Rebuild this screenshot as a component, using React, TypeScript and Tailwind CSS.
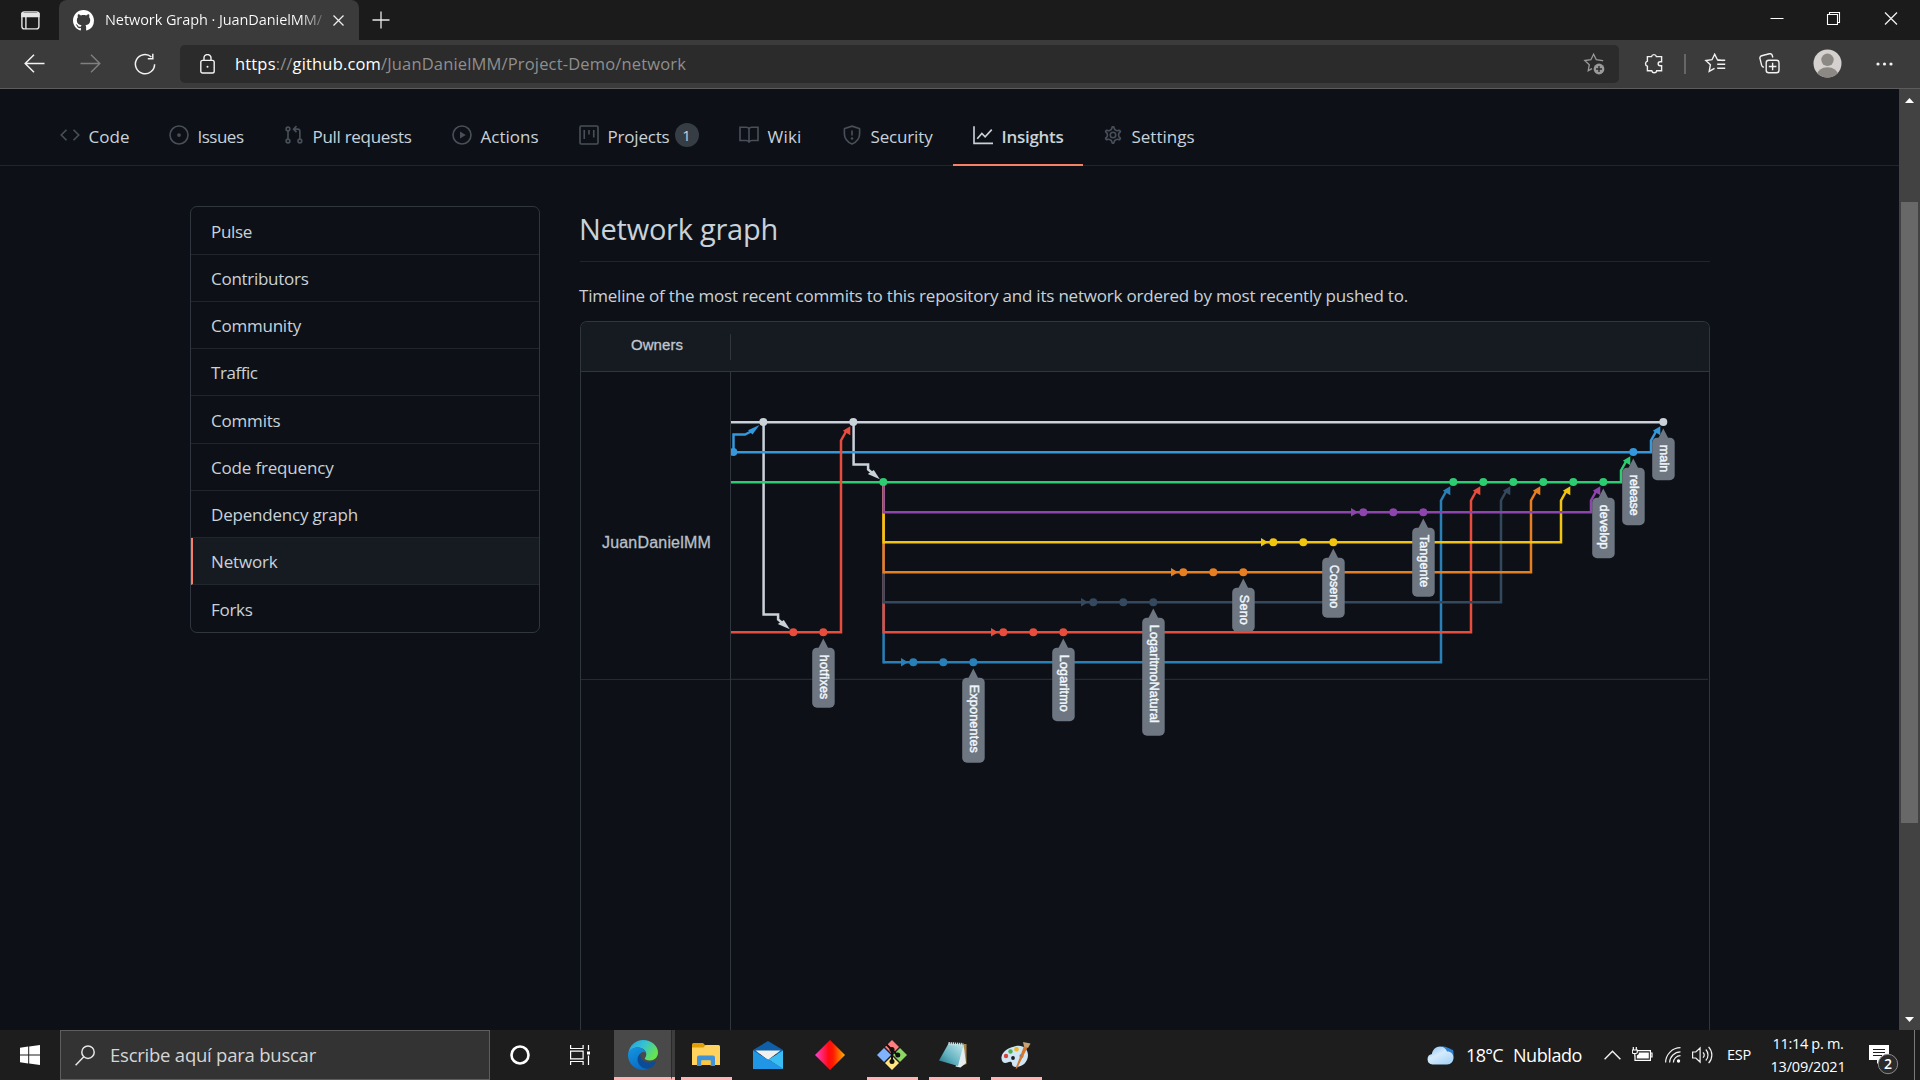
import { useLayoutEffect, useRef, type ReactNode } from "react";

/** Text run whose tracking is computed so that it fills exactly `w` pixels. */
function Fit({ w, className = "", children }: { w: number; className?: string; children: ReactNode }) {
  const ref = useRef<HTMLSpanElement>(null);
  useLayoutEffect(() => {
    const el = ref.current;
    if (!el) return;
    el.style.letterSpacing = "0px";
    const n = (el.textContent ?? "").length;
    el.style.letterSpacing = `${(w - el.getBoundingClientRect().width) / n}px`;
  }, [w]);
  return (
    <span ref={ref} className={`inline-block shrink-0 whitespace-pre ${className}`}>
      {children}
    </span>
  );
}

/* ---------- Browser chrome ---------- */

const MARK =
  "M8 0C3.58 0 0 3.58 0 8c0 3.54 2.29 6.53 5.47 7.59.4.07.55-.17.55-.38 0-.19-.01-.82-.01-1.49-2.01.37-2.53-.49-2.69-.94-.09-.23-.48-.94-.82-1.13-.28-.15-.68-.52-.01-.53.63-.01 1.08.58 1.23.82.72 1.21 1.87.87 2.33.66.07-.52.28-.87.51-1.07-1.78-.2-3.64-.89-3.64-3.95 0-.87.31-1.59.82-2.15-.08-.2-.36-1.02.08-2.12 0 0 .67-.21 2.2.82.64-.18 1.32-.27 2-.27s1.36.09 2 .27c1.53-1.04 2.2-.82 2.2-.82.44 1.1.16 1.92.08 2.12.51.56.82 1.27.82 2.15 0 3.07-1.87 3.75-3.65 3.95.29.25.54.73.54 1.48 0 1.07-.01 1.93-.01 2.2 0 .21.15.46.55.38A8.01 8.01 0 0 0 16 8c0-4.42-3.58-8-8-8z";

function TabStrip() {
  return (
    <div className="flex h-10 shrink-0 bg-[#1b1b1b]">
      <div className="flex w-[59px] items-center pl-[21px]">
        <svg width="19" height="19" viewBox="0 0 19 19" fill="none" stroke="#e4e4e4" strokeWidth="1.4">
          <rect x="0.9" y="0.9" width="17" height="17" rx="2.4" />
          <path d="M1 2.5h17v3H1z" fill="#e4e4e4" />
          <path d="M4.9 6v12" />
        </svg>
      </div>
      <div className="flex w-[300px] items-center rounded-t-lg bg-[#3b3b3b] pl-3.5">
        <svg width="21" height="21" viewBox="0 0 16 16" fill="#fff" className="shrink-0">
          <path d={MARK} />
        </svg>
        <Fit
          w={217}
          className="ml-[11px] bg-linear-to-r from-white from-90% to-[#6b6b6b] bg-clip-text text-[14.5px] text-transparent"
        >
          Network Graph · JuanDanielMM/
        </Fit>
        <svg width="11" height="11" viewBox="0 0 11 11" stroke="#eee" strokeWidth="1.3" className="ml-[11px] shrink-0">
          <path d="M0.5 0.5l10 10M10.5 0.5l-10 10" />
        </svg>
      </div>
      <svg width="18" height="18" viewBox="0 0 18 18" stroke="#e8e8e8" strokeWidth="1.3" className="mt-[11px] ml-[13px]">
        <path d="M9 0.5v17M0.5 9h17" />
      </svg>
      <div className="ml-auto flex">
        <svg width="14" height="40" viewBox="0 0 14 40" className="mr-[42px]">
          <path d="M0.5 18.5h13" stroke="#fff" />
        </svg>
        <svg width="15" height="40" viewBox="0 0 15 40" fill="none" stroke="#fff" strokeWidth="1.1" className="mr-[43px]">
          <path d="M1.5 14.5h10v10h-10zM3.5 14.5v-2h10v10h-2" />
        </svg>
        <svg width="14" height="40" viewBox="0 0 14 40" stroke="#eee" strokeWidth="1.3" className="mr-[22px]">
          <path d="M1 12.5l12 12M13 12.5l-12 12" />
        </svg>
      </div>
    </div>
  );
}

function Toolbar() {
  return (
    <div className="flex h-[49px] shrink-0 border-b border-[#5c5c5c] bg-[#3b3b3b] pb-px">
      <div className="flex w-[180px] items-center pl-[24px]">
        <svg width="21" height="19" viewBox="0 0 21 19" fill="none" stroke="#f2f2f2" strokeWidth="1.5">
          <path d="M20.5 9.5H1M10 0.8L1.2 9.5 10 18.2" />
        </svg>
        <svg width="21" height="19" viewBox="0 0 21 19" fill="none" stroke="#808080" strokeWidth="1.4" className="ml-[35px]">
          <path d="M0.5 9.5H20M11 0.8l8.8 8.7L11 18.2" />
        </svg>
        <svg width="22" height="22" viewBox="0 0 22 22" fill="none" stroke="#f2f2f2" strokeWidth="1.5" className="ml-[33px]">
          <path d="M20.6 11.2A9.6 9.6 0 1 1 17.4 4M18.8 0.8v5h-5" />
        </svg>
      </div>
      <div className="mt-[5px] flex h-[38px] w-[1439px] items-center rounded-[5px] bg-[#2b2b2b] pl-5">
        <svg width="15" height="20" viewBox="0 0 15 20" fill="none" stroke="#f2f2f2" strokeWidth="1.4">
          <rect x="0.8" y="6.4" width="13.4" height="12.6" rx="1.8" />
          <path d="M4 6.4V4a3.5 3.5 0 0 1 7 0v2.4" />
          <circle cx="7.5" cy="12.7" r="1" fill="#f2f2f2" stroke="none" />
        </svg>
        <Fit w={451} className="ml-5 text-[16.5px] text-[#8f8f8f]">
          <span className="text-white">https</span>://<span className="text-white">github.com</span>
          /JuanDanielMM/Project-Demo/network
        </Fit>
        <svg width="22" height="22" viewBox="0 0 22 22" fill="none" stroke="#999" strokeWidth="1.3" className="mr-[14px] ml-auto">
          <path d="M20 8.2l-.6-.7-6.1-.8-2.7-5.5-2.7 5.5-6.1.8 4.5 4.2-1.1 6 3.8-2" />
          <circle cx="16" cy="16" r="5.4" fill="#999" stroke="none" />
          <path d="M16 13v6M13 16h6" stroke="#2b2b2b" strokeWidth="1.4" />
        </svg>
      </div>
      <div className="flex flex-1 items-center pl-[25px]">
        <svg width="20" height="21" viewBox="0 0 20 21" fill="none" stroke="#f2f2f2" strokeWidth="1.4">
          <path d="M3.4 3.6h4.1a2.5 2.5 0 0 1 4.9 0h5.2v5.1h-1.4a2 2 0 0 0 0 4.1h1.4v5h-4.9a2.5 2.5 0 0 1-4.9 0H3.4v-4.6a2.6 2.6 0 0 1 0-5z" />
        </svg>
        <div className="ml-5 h-5 w-0.5 bg-[#666]" />
        <svg width="22" height="21" viewBox="0 0 22 21" fill="none" stroke="#f2f2f2" strokeWidth="1.4" className="ml-[18px]">
          <path d="M19.5 7.5l-6.1-.8-2.7-5.5-2.7 5.5-6.1.8 4.5 4.2-1.2 6.6 5.3-3M13.2 7.3h8M13.2 11.3h8M13.2 15.2h8" />
        </svg>
        <svg width="21" height="21" viewBox="0 0 21 21" fill="none" stroke="#f2f2f2" strokeWidth="1.4" className="ml-[33px]">
          <rect x="7.2" y="7.2" width="12.8" height="12.6" rx="2.5" />
          <path d="M13.6 9.7v7.6M9.8 13.5h7.6M4.8 14.4l-1.2-.7a3 3 0 0 1-1-1.600L1 5.7a2.4 2.4 0 0 1 1.7-3l7.7-1.9a2.4 2.4 0 0 1 2.9 1.7l.5 2" />
        </svg>
        <svg width="29" height="29" viewBox="0 0 29 29" className="ml-[33px]">
          <clipPath id="avatar">
            <circle cx="14.5" cy="14.5" r="14" />
          </clipPath>
          <g clipPath="url(#avatar)">
            <rect width="29" height="29" fill="#d4d1ce" />
            <circle cx="14.5" cy="10.8" r="6.2" fill="#8c8884" />
            <ellipse cx="14.5" cy="25.6" rx="10.4" ry="7.3" fill="#8c8884" />
          </g>
        </svg>
        <svg width="17" height="4" viewBox="0 0 17 4" fill="#f2f2f2" className="ml-[34px]">
          <circle cx="2" cy="2" r="1.6" />
          <circle cx="8.5" cy="2" r="1.6" />
          <circle cx="15" cy="2" r="1.6" />
        </svg>
      </div>
    </div>
  );
}

/* ---------- Repository navigation ---------- */

const GEAR =
  "M7.429 1.525a6.593 6.593 0 011.142 0c.036.003.108.036.137.146l.289 1.105c.147.56.55.967.997 1.189.174.086.341.183.501.29.417.278.97.423 1.53.27l1.102-.303c.11-.03.175.016.195.046.219.31.41.641.573.989.014.031.022.11-.059.19l-.815.806c-.411.406-.562.957-.53 1.456a4.588 4.588 0 010 .582c-.032.499.119 1.05.53 1.456l.815.806c.08.08.073.159.059.19a6.494 6.494 0 01-.573.99c-.02.029-.086.074-.195.045l-1.103-.303c-.559-.153-1.112-.008-1.529.27-.16.107-.327.204-.5.29-.449.222-.851.628-.998 1.189l-.289 1.105c-.029.11-.101.143-.137.146a6.613 6.613 0 01-1.142 0c-.036-.003-.108-.037-.137-.146l-.289-1.105c-.147-.56-.55-.967-.997-1.189a4.502 4.502 0 01-.501-.29c-.417-.278-.97-.423-1.53-.27l-1.102.303c-.11.03-.175-.016-.195-.046a6.492 6.492 0 01-.573-.989c-.014-.031-.022-.11.059-.19l.815-.806c.411-.406.562-.957.53-1.456a4.587 4.587 0 010-.582c.032-.499-.119-1.05-.53-1.456l-.815-.806c-.08-.08-.073-.159-.059-.19a6.44 6.44 0 01.573-.99c.02-.029.086-.075.195-.045l1.103.303c.559.153 1.112.008 1.529-.27.16-.107.327-.204.5-.29.449-.222.851-.628.998-1.189l.289-1.105c.029-.11.101-.143.137-.146z";

const NAV: { label: string; box: string; w: number; icon: ReactNode; active?: boolean; count?: number }[] = [
  { label: "Code", box: "w-[109px]", w: 41, icon: <path d="M5.2 3.8L1 8l4.2 4.2M10.8 3.8L15 8l-4.2 4.2" /> },
  {
    label: "Issues",
    box: "w-[115px]",
    w: 46,
    icon: (
      <>
        <circle cx="8" cy="8" r="7.2" />
        <circle cx="8" cy="8" r="1.5" fill="currentColor" stroke="none" />
      </>
    ),
  },
  {
    label: "Pull requests",
    box: "w-[168px]",
    w: 99,
    icon: (
      <>
        <circle cx="3.2" cy="3.2" r="1.5" />
        <circle cx="3.2" cy="12.8" r="1.5" />
        <circle cx="12.7" cy="12.8" r="1.5" />
        <path d="M3.2 4.8v6.4M12.7 11.2V5.1a1.8 1.8 0 0 0-1.8-1.8H8.2M10 0.9L7.6 3.3 10 5.7" />
      </>
    ),
  },
  {
    label: "Actions",
    box: "w-[127px]",
    w: 58,
    icon: (
      <>
        <circle cx="8" cy="8" r="7.2" />
        <path d="M6.4 5.2v5.6L11 8z" fill="currentColor" stroke="none" />
      </>
    ),
  },
  {
    label: "Projects",
    box: "w-[160px]",
    w: 62,
    count: 1,
    icon: (
      <>
        <rect x="0.8" y="0.8" width="14.4" height="14.4" rx="1" />
        <path d="M4.2 4v7.2M8 4v3.6M11.8 4v6" />
      </>
    ),
  },
  {
    label: "Wiki",
    box: "w-[103px]",
    w: 34,
    icon: <path d="M8 14.2V3.6C8 2.6 7 1.8 5.6 1.8H0.8v10.6h4.6c1.4 0 2.6.7 2.6 1.8 0-1.1 1.2-1.8 2.6-1.8h4.6V1.8h-4.8C9 1.8 8 2.6 8 3.6" />,
  },
  {
    label: "Security",
    box: "w-[131px]",
    w: 62,
    icon: (
      <>
        <path d="M8 0.9l5.8 1.9c.2.1.3.2.3.4V7c0 3.6-1.9 6.4-6.1 8.2C3.8 13.4 1.9 10.6 1.9 7V3.2c0-.2.1-.3.3-.4z" />
        <path d="M8 4.4v4" />
        <circle cx="8" cy="10.8" r="1" fill="currentColor" stroke="none" />
      </>
    ),
  },
  {
    label: "Insights",
    box: "w-[130px]",
    w: 62,
    active: true,
    icon: <path d="M0.8 1v13.7H16M3.4 11l3.7-4.2 2.6 2.6L15 3.7" />,
  },
  {
    label: "Settings",
    box: "w-[130px]",
    w: 63,
    icon: (
      <>
        <path d={GEAR} />
        <circle cx="8" cy="8" r="2.2" />
      </>
    ),
  },
];

function RepoNav() {
  return (
    <nav className="flex h-[77px] shrink-0 border-b border-[#21262d] pt-[19px] pl-10">
      {NAV.map((n) => (
        <div
          key={n.label}
          className={`flex h-[58px] items-start pt-[17px] pl-5 ${n.box} ${n.active ? "border-b-2 border-[#f78166]" : ""}`}
        >
          <svg
            width="20"
            height="20"
            viewBox="0 0 16 16"
            fill="none"
            stroke="currentColor"
            strokeWidth="1.3"
            className={`shrink-0 ${n.active ? "text-[#c9d1d9]" : "text-[#484f58]"}`}
          >
            {n.icon}
          </svg>
          <Fit w={n.w} className={`ml-[8.5px] text-[17px] leading-[24px] text-[#c9d1d9] ${n.active ? "font-semibold" : ""}`}>
            {n.label}
          </Fit>
          {n.count && (
            <span className="-mt-[2px] ml-[5px] flex size-6 items-center justify-center rounded-full bg-[#373d45] text-[15px] font-medium text-[#c9d1d9]">
              {n.count}
            </span>
          )}
        </div>
      ))}
    </nav>
  );
}

/* ---------- Sidebar ---------- */

const MENU = [
  { label: "Pulse", w: 41, h: "h-[48px]" },
  { label: "Contributors", w: 97.5, h: "h-[47px]" },
  { label: "Community", w: 90, h: "h-[47px]" },
  { label: "Traffic", w: 46.5, h: "h-[47px]" },
  { label: "Commits", w: 69.5, h: "h-[48px]" },
  { label: "Code frequency", w: 122.5, h: "h-[47px]" },
  { label: "Dependency graph", w: 147, h: "h-[47px]" },
  { label: "Network", w: 66.5, h: "h-[47px]" },
  { label: "Forks", w: 41.5, h: "h-[47px]" },
];

function Sidebar() {
  return (
    <aside className="h-[427px] w-[350px] shrink-0 overflow-hidden rounded-[7px] border border-[#30363d]">
      {MENU.map((m) => (
        <div
          key={m.label}
          className={`flex items-center border-b border-[#21262d] pt-0.5 text-[17px] text-[#c9d1d9] last:border-b-0 ${m.h} ${
            m.label === "Network" ? "border-l-2 border-l-[#f78166] bg-[#161b22] pl-[18px]" : "pl-5"
          }`}
        >
          <Fit w={m.w}>{m.label}</Fit>
        </div>
      ))}
    </aside>
  );
}

/* ---------- Network graph ---------- */

const C = {
  main: "#c9d1d9",
  release: "#3498db",
  develop: "#2ecc71",
  tangente: "#8e44ad",
  coseno: "#f1c40f",
  seno: "#e67e22",
  natural: "#34495e",
  log: "#e74c3c",
  exp: "#2980b9",
};

const DEV_X = 883.6;

/** Feature branches, lowest lane first: lane y, first commit x, merge target x. */
const FEATURES = [
  { color: C.exp, y: 662.3, x: 913.3, to: 1453.3 },
  { color: C.log, y: 632.3, x: 1003.3, to: 1483.3 },
  { color: C.natural, y: 602.3, x: 1093.3, to: 1513.3 },
  { color: C.seno, y: 572.3, x: 1183.3, to: 1543.3 },
  { color: C.coseno, y: 542.3, x: 1273.3, to: 1573.3 },
  { color: C.tangente, y: 512.3, x: 1363.3, to: 1603.3 },
];

const TAGS = [
  { t: "hotfixes", x: 823.3, y: 632, h: 60, w: 44.5 },
  { t: "Exponentes", x: 973.3, y: 662, h: 85, w: 68 },
  { t: "Logaritmo", x: 1063.3, y: 632, h: 73.5, w: 57 },
  { t: "LogaritmoNatural", x: 1153.3, y: 602, h: 118, w: 98 },
  { t: "Seno", x: 1243.3, y: 572, h: 44, w: 30 },
  { t: "Coseno", x: 1333.3, y: 542, h: 60, w: 43.5 },
  { t: "Tangente", x: 1423.3, y: 512, h: 69, w: 52.5 },
  { t: "develop", x: 1603.3, y: 482, h: 60.5, w: 44.5 },
  { t: "release", x: 1633.3, y: 452, h: 57.5, w: 41 },
  { t: "main", x: 1663.3, y: 422, h: 42.5, w: 27.5 },
];

/** Line leaving a lane, rising to just below its merge commit, with arrowhead. */
function Merge({ from, y, to, ty, color }: { from: number; y: number; to: number; ty: number; color: string }) {
  return (
    <g>
      <path d={`M${from} ${y}H${to - 12.3}V${ty + 18.5}L${to - 7} ${ty + 9}`} fill="none" stroke={color} />
      <path d={`M${to - 3} ${ty + 4.3}l-7.5 4.4l7.5 4.6z`} fill={color} />
    </g>
  );
}

/** Line dropping from a main commit to the first commit of a branch. */
function Drop({ x, y, to, ty }: { x: number; y: number; to: number; ty: number }) {
  return (
    <g>
      <path d={`M${x} ${y}V${ty - 17.4}H${to - 15.2}V${ty - 12.5}L${to - 11} ${ty - 9}`} fill="none" stroke={C.main} />
      <path d={`M${to - 3.5} ${ty - 2.8}L${to - 9.5} ${ty - 12}L${to - 15.5} ${ty - 8}z`} fill={C.main} />
    </g>
  );
}

function Dots({ xs, y, color }: { xs: number[]; y: number; color: string }) {
  return (
    <>
      {xs.map((x) => (
        <circle key={x} cx={x} cy={y} r="4" fill={color} />
      ))}
    </>
  );
}

function Graph() {
  return (
    <svg width="978" height="658" viewBox="731 372 978 658" strokeWidth="2.5" className="block">
      <path d="M731 679.3H1708" stroke="#262b32" strokeWidth="1.2" />
      <path d="M731 422.2H1663" stroke={C.main} />
      <Drop x={763.6} y={422} to={793.3} ty={632} />
      <Drop x={853.6} y={422} to={883.3} ty={482} />

      <path d="M733.5 452V434.5H745L751 431.5" fill="none" stroke={C.release} />
      <path d="M759.5 425L748 430.3L752.5 434.5z" fill={C.release} />
      <Merge from={731} y={452.2} to={1663.3} ty={422} color={C.release} />
      <Merge from={731} y={482.2} to={1633.3} ty={452} color={C.develop} />
      <Merge from={731} y={632.3} to={853.3} ty={422} color={C.log} />

      {FEATURES.map((f) => (
        <g key={f.color}>
          <path d={`M${DEV_X} 482V${f.y + 1.2}`} fill="none" stroke={f.color} />
          <Merge from={DEV_X} y={f.y} to={f.to} ty={482} color={f.color} />
          <path d={`M${f.x - 12.3} ${f.y - 4.3}v8.6l7 -4.3z`} fill={f.color} />
          <Dots xs={[f.x, f.x + 30, f.x + 60]} y={f.y} color={f.color} />
        </g>
      ))}

      <Dots xs={[763.3, 853.3, 1663.3]} y={422} color={C.main} />
      <Dots xs={[733.3, 1633.3]} y={452} color={C.release} />
      <Dots xs={[883.3, 1453.3, 1483.3, 1513.3, 1543.3, 1573.3, 1603.3]} y={482} color={C.develop} />
      <Dots xs={[793.3, 823.3]} y={632.3} color={C.log} />

      {TAGS.map((g) => (
        <g key={g.t} strokeWidth="0">
          <rect x={g.x - 11.1} y={g.y + 15.7} width="22.5" height={g.h} rx="4.8" fill="#6e7681" />
          <path d={`M${g.x} ${g.y + 6.5}l5 9.7h-10z`} fill="#6e7681" />
          <text
            transform={`translate(${g.x - 3.3} ${g.y + 22.8}) rotate(90)`}
            textLength={g.w}
            fontFamily="Liberation Sans, Arial, sans-serif"
            fontSize="12.5"
            fill="#f0f6fc"
            stroke="#f0f6fc"
            strokeWidth="0.45"
          >
            {g.t}
          </text>
        </g>
      ))}
    </svg>
  );
}

function NetworkPanel() {
  return (
    <div className="mt-3 flex w-[1130px] flex-1 flex-col rounded-t-[7px] border border-b-0 border-[#30363d]">
      <div className="flex h-[50px] shrink-0 items-center rounded-t-[6px] border-b border-[#30363d] bg-[#161b22]">
        <div className="flex h-[26px] w-[150px] items-center border-r border-[#30363d] pb-0.5 pl-[50px] font-['Liberation_Sans',Arial,sans-serif] text-[15px] text-[#c0c7cf] [-webkit-text-stroke:0.3px]">
          <Fit w={52}>Owners</Fit>
        </div>
      </div>
      <div className="flex flex-1">
        <div className="w-[150px] shrink-0 border-r border-[#30363d]">
          <div className="flex h-[308px] items-center border-b border-[#262b32] pt-[35px] pl-[21px] font-['Liberation_Sans',Arial,sans-serif] text-[16px] text-[#b9c0c8] [-webkit-text-stroke:0.3px]">
            <Fit w={109}>JuanDanielMM</Fit>
          </div>
        </div>
        <Graph />
      </div>
    </div>
  );
}

function Scrollbar() {
  return (
    <div className="flex w-[21px] shrink-0 flex-col items-center bg-[#424242]">
      <svg width="21" height="113" viewBox="0 0 21 113" fill="#fff" className="shrink-0">
        <path d="M6 14h9l-4.5-5z" />
      </svg>
      <div className="h-[621px] w-[17px] bg-[#686868]" />
      <svg width="21" height="20" viewBox="0 0 21 20" fill="#fff" className="mt-auto shrink-0">
        <path d="M6 7h9l-4.5 5z" />
      </svg>
    </div>
  );
}

/* ---------- Windows taskbar ---------- */

function EdgeLogo() {
  return (
    <svg width="30" height="30" viewBox="0 0 30 30">
      <defs>
        <linearGradient id="edgeTop" x1="0" y1="0" x2="1" y2="0.5">
          <stop offset="0" stopColor="#1f9fdc" />
          <stop offset="0.5" stopColor="#35c1d5" />
          <stop offset="1" stopColor="#66e34f" />
        </linearGradient>
        <linearGradient id="edgeLow" x1="0" y1="0" x2="0.5" y2="1">
          <stop offset="0" stopColor="#1596e0" />
          <stop offset="1" stopColor="#0a6cc4" />
        </linearGradient>
      </defs>
      <path d="M0.5 13C1.5 5.5 7.5 0 15 0c8.5 0 15 6 15 12.5 0 5-4 8-8 8-3.5 0-5.5-1.2-5.2-2.3.2-.8 1.5-1.5 1.5-4C18.3 10 14 7.5 9.5 7.5 5 7.5 2 10 0.5 13z" fill="url(#edgeTop)" />
      <path d="M0 15C0 9.5 4.5 7.5 9.5 7.5c4 0 8 2 8.7 5.5-1-1-2.5-1.3-3.7-1C10 13.5 9 22 15.5 26.5c2 1.5 4.5 2.2 6 1.8C19.5 29.5 17 30 15 30 6.500 30 0 23 0 15z" fill="url(#edgeLow)" />
      <path d="M12.5 13.500C8 17 9 23 13 26.500c4.500 3.800 10 2 12.500-.8 2-2 3-4.200 2.200-4.700-.7-.4-2.700 1.700-7 1.500C15.500 22.200 11.500 18 12.500 13.500z" fill="#0c4c96" />
    </svg>
  );
}

function FolderLogo() {
  return (
    <svg width="28" height="24" viewBox="0 0 28 24">
      <path d="M0 1.5Q0 0 1.5 0H11l2.5 2.5V6H0z" fill="#e09f06" />
      <path d="M0 4.5H11.5L13.5 2H26.5Q28 2 28 3.5V22H0z" fill="#ffd35e" />
      <path d="M5 23V14.5Q5 12.5 7 12.5H21Q23 12.5 23 14.5V23H18.5V17.5H9.5V23z" fill="#3f94d9" />
      <rect x="9.5" y="17.5" width="9" height="4.5" fill="#ffc738" />
    </svg>
  );
}

function MailLogo() {
  return (
    <svg width="30" height="28" viewBox="0 0 30 28">
      <path d="M0 9L15 0l15 9v4H0z" fill="#0f5ea8" />
      <path d="M2.5 9.5h25L15 19z" fill="#f0f0f0" />
      <path d="M0 9.5L20 21.5 30 28H0z" fill="#1f97e4" />
      <path d="M30 9.5V28L15.5 18.5z" fill="#39bdf2" />
      <path d="M15 18.5L30 28H0z" fill="#2196e6" />
    </svg>
  );
}

function DiamondLogo() {
  return (
    <svg width="30" height="30" viewBox="0 0 30 30">
      <defs>
        <linearGradient id="diamond">
          <stop offset="0" stopColor="#ff3fd0" />
          <stop offset="0.45" stopColor="#ff0a12" />
          <stop offset="0.6" stopColor="#ff1a00" />
          <stop offset="1" stopColor="#ffb400" />
        </linearGradient>
      </defs>
      <path d="M15 0l15 15-15 15L0 15z" fill="url(#diamond)" />
    </svg>
  );
}

function GitLogo() {
  return (
    <svg width="30" height="30" viewBox="0 0 30 30">
      <path d="M15 0l7 7-7 7-7-7z" fill="#ff7f7f" />
      <path d="M7 8l7 7-7 7-7-7z" fill="#80b3ff" />
      <path d="M23 8l7 7-7 7-7-7z" fill="#8ed663" />
      <path d="M15 16l7 7-7 7-7-7z" fill="#ffe680" />
      <path d="M9.5 4.5L15 10v11M15 10l5.5 5" stroke="#111" strokeWidth="2" fill="none" />
      <circle cx="15" cy="9.5" r="2.5" fill="#111" />
      <circle cx="15" cy="21.5" r="2.5" fill="#111" />
      <circle cx="20.8" cy="15" r="2.5" fill="#111" />
    </svg>
  );
}

function NotepadLogo() {
  return (
    <svg width="28" height="28" viewBox="0 0 28 28">
      <defs>
        <linearGradient id="pad" x1="1" y1="0" x2="0" y2="1">
          <stop offset="0" stopColor="#c6e9ee" />
          <stop offset="0.6" stopColor="#5fb0bf" />
          <stop offset="1" stopColor="#1e6d7c" />
        </linearGradient>
      </defs>
      <path d="M25 3h2.5v20L22 25z" fill="#a8854a" />
      <path d="M24.5 3L27 22l-5.5 4.5-5-1z" fill="#e3ecef" />
      <path d="M9.5 2.5l15 1L19 25 0 19.5z" fill="url(#pad)" />
      <path d="M9.5 2.5L24.5 3.5" stroke="#d7dde0" strokeWidth="3" strokeDasharray="1.3 0.8" />
    </svg>
  );
}

function PaintLogo() {
  return (
    <svg width="30" height="28" viewBox="0 0 30 28">
      <path d="M15 5C22 3.5 27 8 27 14c0 7-5.5 12-12 12-3 0-4-1.5-4-3.5s-2.5-2-4.5-1C3 23 0 20.5 0.5 16 1.5 10 8 6.5 15 5z" fill="#cfe6f5" />
      <circle cx="5" cy="15" r="2.2" fill="#d9433e" />
      <circle cx="9.5" cy="10.5" r="2.2" fill="#4caf50" />
      <circle cx="15.5" cy="8.2" r="2.3" fill="#f5b51e" />
      <circle cx="12" cy="17" r="1.9" fill="#1d1d1d" />
      <circle cx="20.5" cy="15" r="2" fill="#2d8ad8" />
      <path d="M23 5l3.5 1.5L16 27.5l-1.5 0z" fill="#d5762a" />
      <path d="M22 1l7.5 1.5L27 7l-4-1.5z" fill="#c8a274" />
    </svg>
  );
}

function AppButton({ box, running, children }: { box: string; running?: boolean; children?: ReactNode }) {
  return (
    <div className={`flex h-full shrink-0 items-center justify-center border-b-[3px] pt-[3px] ${running ? "border-b-[#ffb3b3]" : "border-b-transparent"} ${box}`}>
      {children}
    </div>
  );
}

function Taskbar() {
  return (
    <footer className="flex h-[50px] shrink-0 bg-[#1d1d1d]">
      <div className="flex w-[60px] items-center pl-5">
        <svg width="20" height="20" viewBox="0 0 20 20" fill="#fff">
          <path d="M0 2.7L8.2 1.6V9.5H0zM9.2 1.4L20 0v9.5H9.2zM0 10.5h8.2v7.9L0 17.3zM9.2 10.5H20V20L9.2 18.6z" />
        </svg>
      </div>
      <div className="flex w-[430px] shrink-0 items-center border border-[#5e5e5e] bg-[#333] pl-3.5">
        <svg width="20" height="21" viewBox="0 0 20 21" fill="none" stroke="#e6e6e6" strokeWidth="1.5">
          <circle cx="13" cy="7.2" r="6.2" />
          <path d="M8.8 11.8L0.6 20.3" />
        </svg>
        <Fit w={206} className="ml-[15px] text-[18.5px] text-[#d6d6d6]">
          Escribe aquí para buscar
        </Fit>
      </div>
      <div className="flex w-[124px] shrink-0 items-center pl-5">
        <svg width="20" height="20" viewBox="0 0 20 20" fill="none" stroke="#fff" strokeWidth="2.6">
          <circle cx="10" cy="10" r="8.5" />
        </svg>
        <svg width="21" height="20" viewBox="0 0 21 20" fill="none" stroke="#fff" strokeWidth="1.2" className="ml-10">
          <path d="M0.6 0v3.5h12.5V0M0.6 20v-3.5h12.5V20M0.6 6.2h12.5v7.6H0.6zM18.5 0v5M18.5 10.5V20" />
          <path d="M17 6.5h3v3h-3z" fill="#fff" stroke="none" />
        </svg>
      </div>
      <div className="flex h-full shrink-0">
        <AppButton box="w-[57px] bg-[#494949] pr-1 pl-[5px]" running>
          <EdgeLogo />
        </AppButton>
        <AppButton box="w-1 bg-[#3d3d3d] border-l border-l-[#2a2a2a]" running />
        <AppButton box="w-[51px] ml-1.5 pr-0.5" running>
          <FolderLogo />
        </AppButton>
        <AppButton box="w-[51px] ml-[11px] pr-0.5">
          <MailLogo />
        </AppButton>
        <AppButton box="w-[51px] ml-[11px] pr-0.5">
          <DiamondLogo />
        </AppButton>
        <AppButton box="w-[51px] ml-[11px] pr-0.5" running>
          <GitLogo />
        </AppButton>
        <AppButton box="w-[51px] ml-[11px] pr-[3px]" running>
          <NotepadLogo />
        </AppButton>
        <AppButton box="w-[51px] ml-[11px] pr-0.5" running>
          <PaintLogo />
        </AppButton>
      </div>
      <div className="ml-auto flex w-[492px] shrink-0 items-center text-white">
        <svg width="27" height="19" viewBox="0 0 27 19" className="-ml-px">
          <defs>
            <linearGradient id="cloud" x1="0" y1="0" x2="0.7" y2="1">
              <stop offset="0" stopColor="#7fc0f5" />
              <stop offset="0.5" stopColor="#d6ebfb" />
              <stop offset="1" stopColor="#a9d5f8" />
            </linearGradient>
          </defs>
          <path d="M15 0.5c5 0 7 2 11 3.5 1 3 .5 8 0 9l-6 2z" fill="#2d7fd0" />
          <path d="M5.5 18.5a5.3 5.3 0 0 1-.6-10.5C5.5 3.5 9 .5 13 .5c3.5 0 6 2 7 5 3.8-.2 6.5 2.5 6.5 6.3 0 3.7-2.5 6.7-6.5 6.7z" fill="url(#cloud)" />
        </svg>
        <Fit w={37} className="ml-[12px] pt-px text-[18px]">18°C</Fit>
        <Fit w={69} className="ml-[10px] pt-px text-[18px]">Nublado</Fit>
        <svg width="17" height="10" viewBox="0 0 17 10" fill="none" stroke="#f2f2f2" strokeWidth="1.4" className="ml-[22px]">
          <path d="M0.6 9.2L8.5 1.2l7.9 8" />
        </svg>
        <svg width="21" height="16" viewBox="0 0 21 16" fill="none" stroke="#fff" strokeWidth="1.2" className="ml-[11px]">
          <path d="M5 3.6h13.4v9.8H3V8.5M18.4 6h1.6v4h-1.6M1.3 0v3M4.3 0v3M0.3 3h5v2q0 1.5-1.5 1.5h-2Q0.3 6.5 0.3 5zM2.8 6.5v3" />
          <path d="M6.8 5.5h10v6h-12V8.5l2-1.5z" fill="#fff" stroke="none" />
        </svg>
        <svg width="16" height="16" viewBox="0 0 16 16" fill="none" stroke="#f0f0f0" strokeWidth="1.2" className="ml-3">
          <path d="M0.6 15.5A15 15 0 0 1 15.5 0.7M4.6 15.5A11 11 0 0 1 15.5 4.8M8.4 15.5A7 7 0 0 1 15.5 8.7" />
          <circle cx="13.5" cy="14" r="1.7" fill="#fff" stroke="none" />
        </svg>
        <svg width="21" height="18" viewBox="0 0 21 18" fill="none" stroke="#f2f2f2" strokeWidth="1.2" className="ml-[11px]">
          <path d="M0.6 6h3.2l4.3-4v14l-4.3-4H0.6zM11 6.3a4 4 0 0 1 0 5.4M13.8 3.5a8 8 0 0 1 0 11M16.6 0.8a12 12 0 0 1 0 16.4" />
        </svg>
        <Fit w={24} className="ml-[14px] text-[14.5px]">ESP</Fit>
        <div className="ml-[19px] flex w-[76px] flex-col items-center text-[14.5px] leading-[23px]">
          <Fit w={71}>11:14 p. m.</Fit>
          <Fit w={75}>13/09/2021</Fit>
        </div>
        <svg width="32" height="36" viewBox="0 0 32 36" className="mt-1 ml-[22px]">
          <path d="M1 6h20v15h-8l-4 4v-4H1z" fill="#fff" />
          <path d="M5 10.5h12M5 13.5h12M5 16.5h9" stroke="#1d1d1d" strokeWidth="1.2" />
          <circle cx="20" cy="25" r="9.7" fill="#2b2b2b" stroke="#8a8a8a" />
          <text x="20" y="30" textAnchor="middle" fontFamily="Open Sans, sans-serif" fontWeight="600" fontSize="14" fill="#fff">
            2
          </text>
        </svg>
        <div className="mr-[5px] ml-auto h-full w-px bg-[#7a7a7a]" />
      </div>
    </footer>
  );
}

export default function App() {
  return (
    <div className="flex h-[1080px] w-[1920px] flex-col overflow-hidden bg-[#0d1117] font-['Open_Sans','Noto_Sans',sans-serif]">
      <TabStrip />
      <Toolbar />
      <div className="flex min-h-0 flex-1">
        <div className="flex min-w-0 flex-1 flex-col overflow-hidden">
          <RepoNav />
          <div className="flex flex-1 gap-10 pl-[190px]">
            <div className="pt-10">
              <Sidebar />
            </div>
            <main className="flex w-[1130px] flex-col pt-10 text-[#c9d1d9]">
              <div className="flex h-14 shrink-0 items-start border-b border-[#21262d]">
                <Fit w={199} className="-ml-px text-[29px] leading-[46px]">Network graph</Fit>
              </div>
              <div className="mt-[20px] h-[27px] shrink-0 text-[17px] leading-[27px]">
                <Fit w={829} className="-ml-px">Timeline of the most recent commits to this repository and its network ordered by most recently pushed to.</Fit>
              </div>
              <NetworkPanel />
            </main>
          </div>
        </div>
        <Scrollbar />
      </div>
      <Taskbar />
    </div>
  );
}
